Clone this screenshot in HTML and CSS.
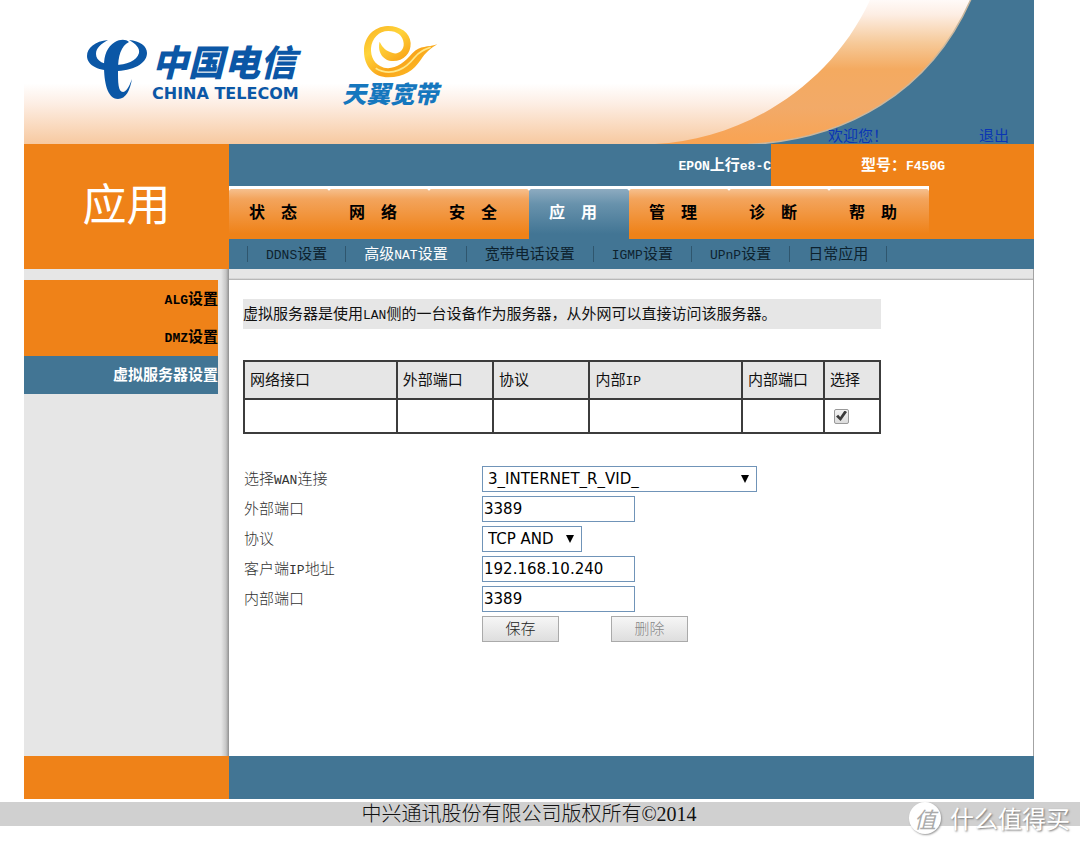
FILE: index.html
```html
<!DOCTYPE html>
<html lang="zh-CN">
<head>
<meta charset="utf-8">
<meta name="viewport" content="width=device-width, initial-scale=1">
<title>虚拟服务器设置</title>
<link rel="stylesheet" href="styles.css">
</head>
<body>
<div class="page">
  <header class="banner">
    <svg class="banner-art" viewBox="640 0 394 144" width="394" height="144" aria-hidden="true">
      <defs>
        <linearGradient id="band" x1="0" y1="0" x2="0" y2="144" gradientUnits="userSpaceOnUse">
          <stop offset="0" stop-color="#fffaf8"/>
          <stop offset="0.1" stop-color="#fdeee4"/>
          <stop offset="0.3" stop-color="#f6c998"/>
          <stop offset="0.48" stop-color="#f4aa60"/>
          <stop offset="0.75" stop-color="#f2aa68"/>
          <stop offset="1" stop-color="#f9a352"/>
        </linearGradient>
      </defs>
      <path fill="url(#band)" d="M655 144C740 140 829 89 870 0H975V144Z"/>
      <path fill="#427594" stroke="#c9b79f" stroke-width="1.500" d="M748 144.500C845 140 930 93 971.500 -2H1036V146Z"/>
    </svg>
    <div class="telecom">
      <svg viewBox="0 0 62 62" width="62" height="62" aria-hidden="true">
        <g fill="#0b57a6">
          <path d="M22 2C9 3 1 10 1 18c0 10 13 15 28 15 17 0 32-7 32-18C61 8 54 3 43 2c7 4 11 8 10 13-2 8-13 12-24 12C18 27 10 23 10 16c0-6 5-10 12-14Z"/>
          <path d="M43 4c-3-3-9-3-14 0-8 5-11 13-11 24 0 15 3 33 14 33 8 0 12-9 14-20-3 8-6 13-9 13-5 0-5-10-5-22 0-14 3-24 11-28Z"/>
        </g>
      </svg>
      <div class="telecom-name">
        <span class="telecom-cn">中国电信</span>
        <span class="telecom-en">CHINA TELECOM</span>
      </div>
    </div>
    <div class="broadband">
      <svg class="swirl" viewBox="105 30 225 159" width="75" height="53" aria-hidden="true">
        <defs>
          <linearGradient id="gold" x1="0" y1="0" x2="1" y2="1">
            <stop offset="0" stop-color="#f9b021"/>
            <stop offset="0.3" stop-color="#ffd43a"/>
            <stop offset="0.6" stop-color="#f9a51a"/>
            <stop offset="1" stop-color="#ffc82c"/>
          </linearGradient>
        </defs>
        <path fill="url(#gold)" d="M325 88C295 98 275 90 250 115C225 145 195 165 165 158C135 150 125 125 126 100C128 70 150 48 178 48C205 48 222 62 224 85C226 108 205 122 185 112C165 104 158 92 152 80C144 110 162 138 192 138C225 138 246 115 245 84C243 52 212 32 175 33C135 35 105 65 105 108C105 155 135 187 178 187C225 187 255 165 275 135C290 112 305 100 325 88Z"/>
        <path fill="none" stroke="#ffe887" stroke-width="5" d="M140 160C190 190 235 155 256 128C270 110 285 104 305 97"/>
      </svg>
      <span class="broadband-name">天翼宽带</span>
    </div>
    <div class="greeting">
      <span>欢迎您！</span>
      <a href="#logout">退出</a>
    </div>
  </header>

  <div class="masthead">
    <h1 class="section-name">应用</h1>
    <div class="masthead-main">
      <div class="device">
        <span class="device-type"><span class="lat">EPON</span>上行<span class="lat">e8-C</span></span>
        <span class="device-model">型号：<span class="lat">F450G</span></span>
      </div>
      <nav class="tabs">
        <a class="tab" href="#status">状　态</a>
        <a class="tab" href="#network">网　络</a>
        <a class="tab" href="#security">安　全</a>
        <a class="tab tab-active" href="#app">应　用</a>
        <a class="tab" href="#manage">管　理</a>
        <a class="tab" href="#diagnose">诊　断</a>
        <a class="tab" href="#help">帮　助</a>
      </nav>
      <nav class="subnav">
        <a href="#ddns"><span class="lat">DDNS</span>设置</a>
        <a class="subnav-active" href="#nat">高级<span class="lat">NAT</span>设置</a>
        <a href="#voip">宽带电话设置</a>
        <a href="#igmp"><span class="lat">IGMP</span>设置</a>
        <a href="#upnp"><span class="lat">UPnP</span>设置</a>
        <a href="#daily">日常应用</a>
      </nav>
    </div>
  </div>

  <div class="workspace">
    <nav class="sidebar">
      <a href="#alg"><span class="lat">ALG</span>设置</a>
      <a href="#dmz"><span class="lat">DMZ</span>设置</a>
      <a class="sidebar-active" href="#vserver">虚拟服务器设置</a>
    </nav>
    <main class="content">
      <p class="intro">虚拟服务器是使用<span class="lat">LAN</span>侧的一台设备作为服务器，从外网可以直接访问该服务器。</p>
      <table class="rules">
        <colgroup><col class="c-wide"><col><col><col class="c-wide"><col class="c-port"><col class="c-pick"></colgroup>
        <thead>
          <tr><th>网络接口</th><th>外部端口</th><th>协议</th><th>内部<span class="lat">IP</span></th><th>内部端口</th><th>选择</th></tr>
        </thead>
        <tbody>
          <tr><td></td><td></td><td></td><td></td><td></td><td><input class="tick" type="checkbox" aria-label="选择" checked></td></tr>
        </tbody>
      </table>
      <form class="settings">
        <label for="wan">选择<span class="lat">WAN</span>连接</label>
        <span class="pick pick-wide"><select id="wan"><option>3_INTERNET_R_VID_</option></select></span>
        <label for="outport">外部端口</label>
        <input id="outport" type="text" value="3389">
        <label for="proto">协议</label>
        <span class="pick pick-short"><select id="proto"><option>TCP AND</option></select></span>
        <label for="ip">客户端<span class="lat">IP</span>地址</label>
        <input id="ip" type="text" value="192.168.10.240">
        <label for="inport">内部端口</label>
        <input id="inport" type="text" value="3389">
        <div class="actions">
          <button type="button">保存</button>
          <button type="button" disabled>删除</button>
        </div>
      </form>
    </main>
  </div>

  <div class="base"><div class="base-side"></div><div class="base-main"></div></div>
</div>
<footer class="copyright">中兴通讯股份有限公司版权所有©2014</footer>
<div class="watermark"><span class="watermark-badge">值</span><span>什么值得买</span></div>
</body>
</html>
```

FILE: styles.css
```css
:root {
  --orange: #ef8218;
  --blue: #427594;
  --gray: #e6e6e6;
}
* { box-sizing: border-box; }
body {
  margin: 0;
  padding-bottom: 18px;
  min-height: 100vh;
  display: flex;
  flex-direction: column;
  position: relative;
  background: #fff;
  color: #111;
  font: 15px/20px "Liberation Serif", "Noto Sans CJK SC", serif;
}
a { color: inherit; text-decoration: none; }
.lat { font-family: "Liberation Mono", monospace; font-size: 13px; line-height: 1; }

.page {
  flex: 1;
  display: flex;
  flex-direction: column;
  margin: 0 46px 3px 24px;
}

/* Banner */
.banner {
  position: relative;
  height: 144px;
  display: flex;
  align-items: flex-start;
  background: linear-gradient(#fff 0 58%, #fdeee4 72%, #f7c9a0 100%);
}
.banner-art { position: absolute; top: 0; right: 0; }
.telecom { display: flex; gap: 4px; padding: 38px 0 0 62px; }
.telecom-name {
  display: flex;
  flex-direction: column;
  gap: 4px;
  color: #0b57a6;
}
.telecom-cn { font: italic 900 36px/44px "Noto Sans CJK SC", sans-serif; }
.telecom-en { font: bold 16px/16px "DejaVu Sans", sans-serif; }
.broadband {
  display: flex;
  flex-direction: column;
  align-items: center;
  padding: 25px 0 0 43px;
}
.swirl { margin-left: 22px; }
.broadband-name {
  color: #1577be;
  font: italic 900 24px/30px "Noto Sans CJK SC", sans-serif;
}
.greeting {
  position: relative;
  display: flex;
  gap: 91px;
  margin-left: auto;
  align-self: flex-end;
  padding-right: 25px;
  line-height: 16px;
  color: #0a35b5;
}

/* Masthead */
.masthead { display: flex; }
.section-name {
  flex: 0 0 205px;
  margin: 0;
  display: flex;
  align-items: center;
  justify-content: center;
  background: var(--orange);
  color: #fff;
  font-size: 44px;
  font-weight: 400;
}
.masthead-main { flex: 1; background: var(--orange); }
.device {
  display: flex;
  color: #fff;
  font-weight: bold;
  line-height: 42px;
}
.device-type { flex: 1; background: var(--blue); text-align: right; }
.device-model { flex: 0 0 263px; padding-left: 90px; }
.tabs { display: flex; }
.tab {
  flex: 0 1 100px;
  height: 53px;
  padding-left: 20px;
  border-top: 3px solid #fff;
  background:
    radial-gradient(circle at 4px 4px, transparent 4px, #fff 5px) 0 0 / 4px 4px no-repeat,
    radial-gradient(circle at 0 4px, transparent 4px, #fff 5px) 100% 0 / 4px 4px no-repeat,
    linear-gradient(#f6c08e, #f3a45c 20%, #ef8218 90%);
  color: #000;
  font-size: 16px;
  font-weight: bold;
  line-height: 48px;
}
.tab-active {
  background:
    radial-gradient(circle at 4px 4px, transparent 4px, #fff 5px) 0 0 / 4px 4px no-repeat,
    radial-gradient(circle at 0 4px, transparent 4px, #fff 5px) 100% 0 / 4px 4px no-repeat,
    linear-gradient(#8dabc0, #6892ac 30%, #427594 90%);
  color: #fff;
}
.subnav {
  display: flex;
  padding: 7px 0 7px 18px;
  background: var(--blue);
  color: #0d222e;
  line-height: 16px;
}
.subnav a { padding: 0 18px; border-right: 1px solid #2f566e; }
.subnav a:first-child { border-left: 1px solid #2f566e; }
.subnav .subnav-active { color: #fff; }

/* Workspace */
.workspace { flex: 1; display: flex; }
.sidebar {
  flex: 0 0 205px;
  padding: 11px 11px 0 0;
  background: linear-gradient(to left, #8f8f8f, #c6c6c6 3px, var(--gray) 8px);
  color: #000;
  font-weight: bold;
  line-height: 38px;
  text-align: right;
}
.sidebar a { display: block; background: var(--orange); }
.sidebar .sidebar-active { background: var(--blue); color: #fff; }
.content {
  flex: 1;
  padding: 30px 14px 24px;
  border-right: 1px solid #a3a3a3;
  background: linear-gradient(var(--gray) 0 9px, #a9a9a9 11px, #fff 11px) no-repeat;
}
.intro {
  max-width: 638px;
  margin: 0 0 31px;
  background: var(--gray);
  line-height: 30px;
}
.rules {
  width: 100%;
  max-width: 638px;
  table-layout: fixed;
  border-collapse: collapse;
}
.c-wide { width: 24%; }
.c-port { width: 82px; }
.c-pick { width: 56px; }
.rules th, .rules td {
  padding: 0 5px;
  border: 2px solid #3c3c3c;
  font-weight: normal;
  text-align: left;
}
.rules th { height: 38px; background: var(--gray); }
.rules td { height: 34px; }
.tick {
  appearance: none;
  display: block;
  width: 15px;
  height: 15px;
  margin: 0 4px;
  border: 1px solid #999;
  border-radius: 2px;
  background: linear-gradient(#f2f2f2, #dcdcdc);
}
.tick:checked::before {
  content: "";
  display: block;
  width: 11px;
  height: 11px;
  margin: 1px;
  background: #3a3a3a;
  clip-path: polygon(0 55%, 20% 38%, 38% 58%, 78% 0, 100% 14%, 42% 96%);
}

/* Settings form */
.settings {
  display: grid;
  grid-template-columns: 238px 1fr;
  grid-auto-rows: 30px;
  align-items: center;
  justify-items: start;
  margin-top: 30px;
  padding-left: 1px;
  color: #333;
  font-weight: 300;
}
.settings input, .settings select {
  height: 26px;
  border: 1px solid #7094b8;
  border-radius: 0;
  background: #fff;
  color: #000;
  font: 15px "DejaVu Sans", sans-serif;
}
.settings input { width: 153px; padding: 0 1px; }
.settings select { appearance: none; width: 100%; padding: 0 5px; }
.pick { position: relative; display: flex; }
.pick-wide { width: 275px; }
.pick-short { width: 100px; }
.pick::after {
  content: "";
  position: absolute;
  top: 9px;
  right: 8px;
  width: 8px;
  height: 8px;
  background: #000;
  clip-path: polygon(0 0, 100% 0, 50% 100%);
  pointer-events: none;
}
.actions { grid-column: 2; display: flex; gap: 52px; }
.actions button {
  width: 77px;
  height: 26px;
  padding: 0;
  border: 1px solid #aaa;
  background: linear-gradient(#f6f6f6, #dedede);
  color: #222;
  font: inherit;
}
.actions button:disabled { color: #888; }

/* Footer */
.base { display: flex; height: 43px; }
.base-side { flex: 0 0 205px; background: var(--orange); }
.base-main { flex: 1; background: var(--blue); }
.copyright {
  padding: 0 46px 0 24px;
  background: #d0d0d0;
  font-size: 20px;
  font-weight: 300;
  line-height: 24px;
  text-align: center;
}
.watermark {
  position: absolute;
  right: 10px;
  bottom: 10px;
  display: flex;
  align-items: center;
  gap: 9px;
  color: #fff;
  font: 24px/32px "Noto Sans CJK SC", sans-serif;
  text-shadow: 1px 1px 2px #777;
}
.watermark-badge {
  width: 32px;
  border-radius: 50%;
  background: #fff;
  box-shadow: 1px 1px 2px #999;
  color: #aaa;
  font-size: 22px;
  font-style: italic;
  text-align: center;
  text-shadow: none;
}
```
